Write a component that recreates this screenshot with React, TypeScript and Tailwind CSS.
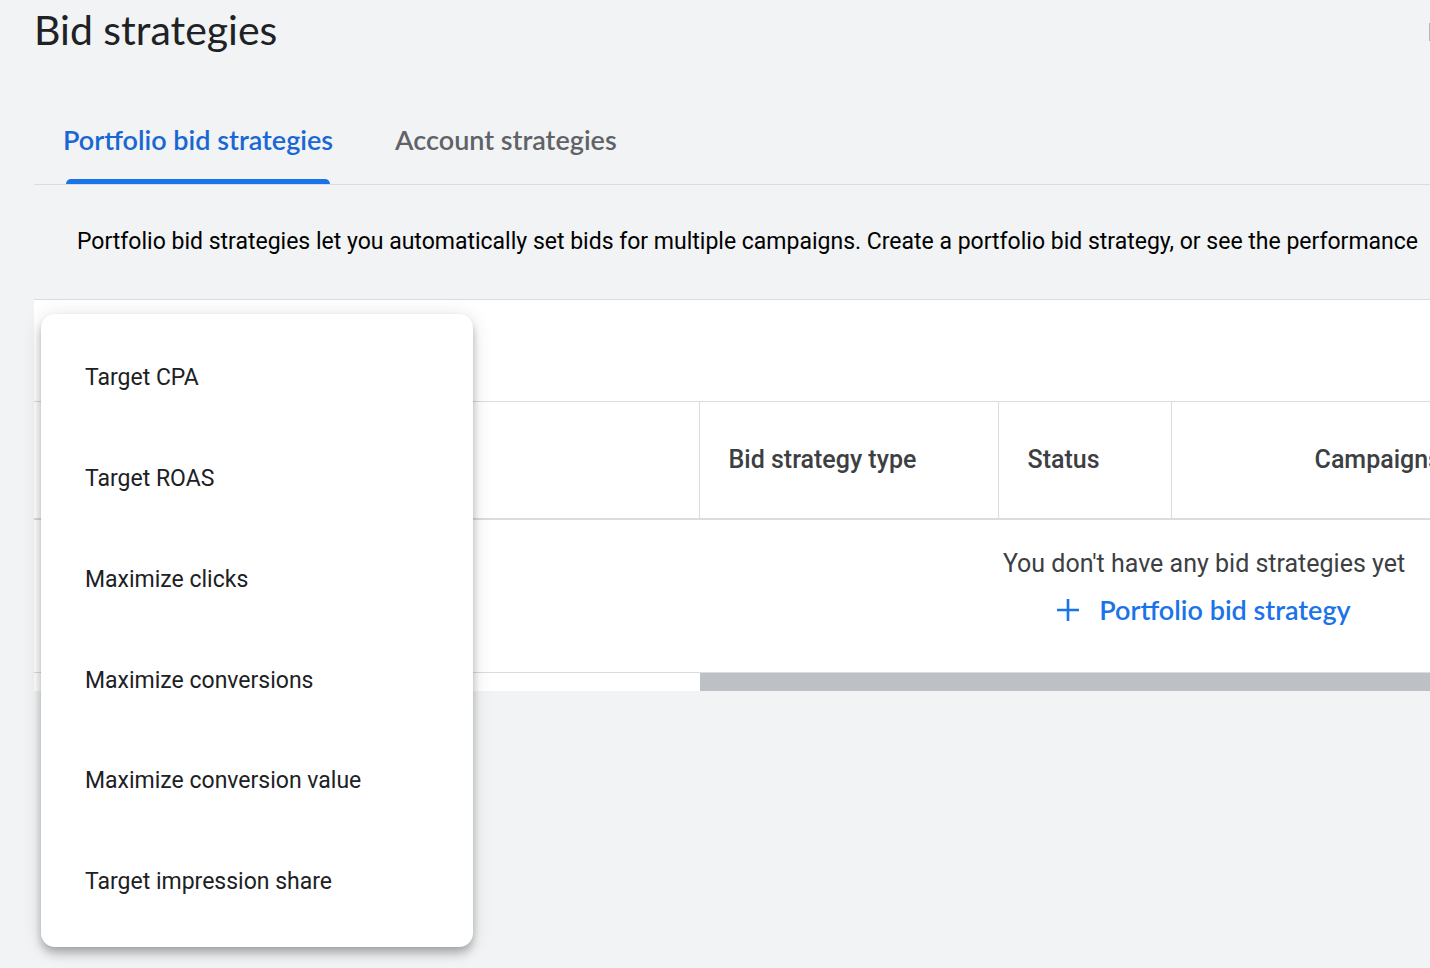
import { useState } from "react";

const TABS = ["Portfolio bid strategies", "Account strategies"];

const STRATEGY_TYPES = [
  "Target CPA",
  "Target ROAS",
  "Maximize clicks",
  "Maximize conversions",
  "Maximize conversion value",
  "Target impression share",
];

function PlusIcon() {
  return (
    <svg className="h-[22px] w-[22px]" viewBox="0 0 22 22" fill="currentColor" aria-hidden="true">
      <path d="M9.7 0h2.6v9.7H22v2.6h-9.7V22H9.7v-9.7H0V9.7h9.7z" />
    </svg>
  );
}

function TabBar({ active, onSelect }: { active: string; onSelect: (tab: string) => void }) {
  return (
    <div
      role="tablist"
      className="flex h-[89px] gap-1 border-b border-[#dadce0] font-[Lato,sans-serif] text-[27px] font-semibold"
    >
      {TABS.map((tab) => (
        <button
          key={tab}
          type="button"
          role="tab"
          aria-selected={tab === active}
          onClick={() => onSelect(tab)}
          className={
            tab === active
              ? "relative px-[29px] whitespace-nowrap text-[#1967d2]"
              : "relative px-[29px] whitespace-nowrap text-[#5f6368]"
          }
        >
          {tab}
          {tab === active && (
            <span className="absolute inset-x-8 bottom-0 h-[5px] rounded-t-[5px] bg-[#1a73e8]" />
          )}
        </button>
      ))}
    </div>
  );
}

/** Menu of strategy types, opened over the table toolbar. */
function StrategyMenu() {
  return (
    <div
      role="menu"
      className="absolute top-[14px] left-[7px] z-10 grid h-[633px] w-[432px] auto-rows-fr rounded-[14px] bg-white py-[14px] shadow-[0_4px_8px_-2px_rgba(0,0,0,0.2),0_8px_10px_rgba(0,0,0,0.14),0_2px_20px_rgba(0,0,0,0.12)]"
    >
      {STRATEGY_TYPES.map((type) => (
        <button
          key={type}
          type="button"
          role="menuitem"
          className="px-11 text-left text-[23px] text-[#202124] hover:bg-gray-100"
        >
          {type}
        </button>
      ))}
    </div>
  );
}

function StrategyTable() {
  return (
    <table className="w-[2340px] table-fixed border-collapse text-left">
      <colgroup>
        <col className="w-[665px]" />
        <col className="w-[299px]" />
        <col className="w-[173px]" />
        <col className="w-[299px]" />
        <col />
      </colgroup>
      <thead>
        <tr className="h-[117px] border-t border-b-2 border-[#dadce0] text-[25px] text-[#3c4043]">
          <td className="border-r border-[#dadce0]" />
          <th className="border-r border-[#dadce0] px-[29px] font-medium">Bid strategy type</th>
          <th className="border-r border-[#dadce0] px-[29px] font-medium">Status</th>
          <th className="px-[29px] text-right font-medium">Campaigns</th>
          <td />
        </tr>
      </thead>
      <tbody>
        <tr className="h-[154px] border-b border-[#dadce0]">
          <td colSpan={5} className="pb-[18px] text-center">
            <p className="text-[25px] leading-[46px] text-[#3c4043]">You don't have any bid strategies yet</p>
            <button
              type="button"
              className="inline-flex h-[46px] items-center gap-5 font-[Lato,sans-serif] text-[27px] font-semibold text-[#1a73e8]"
            >
              <PlusIcon />
              Portfolio bid strategy
            </button>
          </td>
        </tr>
      </tbody>
    </table>
  );
}

export default function App() {
  const [activeTab, setActiveTab] = useState(TABS[0]);

  return (
    <main className="min-h-screen overflow-hidden bg-[#f1f3f4] pl-[34px] font-[Roboto,sans-serif]">
      <header className="flex h-16 items-center justify-between">
        <h1 className="pb-1 font-[Lato,sans-serif] text-[41px] text-[#202124]">Bid strategies</h1>
        <span className="h-[18px] w-px bg-[#b4b6b8]" />
      </header>

      <div className="pt-8">
        <TabBar active={activeTab} onSelect={setActiveTab} />
      </div>

      <p className="flex h-[114px] items-center pl-[43px] text-[23px] whitespace-nowrap text-black">
        Portfolio bid strategies let you automatically set bids for multiple campaigns. Create a portfolio bid
        strategy, or see the performance
      </p>

      <section className="relative border-t border-[#dadce0] bg-white">
        <StrategyMenu />
        <div className="overflow-hidden pt-[101px]">
          <StrategyTable />
        </div>
        {/* Horizontal scroll track; the thumb starts after the pinned column */}
        <div className="flex h-[18px] pl-[666px]">
          <div className="flex-1 bg-[#bdc1c6]" />
        </div>
      </section>
    </main>
  );
}
